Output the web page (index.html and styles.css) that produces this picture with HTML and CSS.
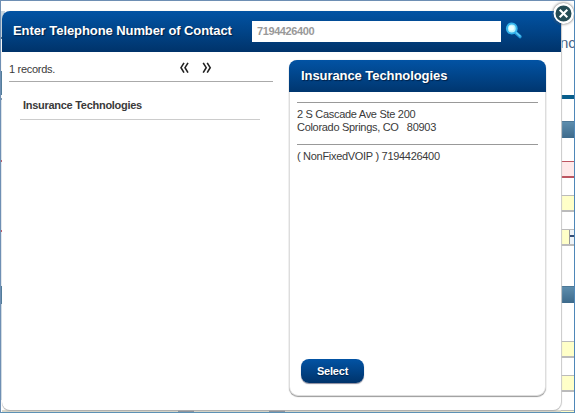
FILE: index.html
```html
<!DOCTYPE html>
<html lang="en">
<head>
<meta charset="utf-8">
<title>Contact Lookup</title>
<link rel="stylesheet" href="styles.css">
</head>
<body>
<div class="page">
  <div class="heading">nc</div>
  <div class="rule"></div>
  <div class="section first"></div>
  <div class="field error"></div>
  <div class="field"></div>
  <div class="field select"><span class="arrow"></span></div>
  <div class="section second"></div>
  <div class="field third"></div>
  <div class="field"></div>
  <div class="field last"></div>
</div>
<div class="edge"></div>
<div class="foot"><i></i><i></i><i></i></div>
<main class="dialog">
  <header class="bar">
    <h1 class="title">Enter Telephone Number of Contact</h1>
    <div class="input"><span>7194426400</span></div>
    <svg class="search" viewBox="0 0 18 18" width="18" height="18">
      <path d="M10.5 10.5 15 14.6" stroke="#249bdc" stroke-width="3.4" stroke-linecap="round"/>
      <path d="M10.8 10.2 15 14" stroke="#69d0f6" stroke-width="1.3" stroke-linecap="round"/>
      <circle cx="6.8" cy="6.5" r="4.9" fill="#b9f3fc" stroke="#35b5ed" stroke-width="2"/>
      <circle cx="6.4" cy="6" r="2.6" fill="#e9feff"/>
    </svg>
  </header>
  <div class="body">
    <section class="results">
      <div class="pager">
        <span class="count">1 records.</span>
        <svg class="arrows" width="34" height="13" viewBox="0 0 34 13" fill="none" stroke="#222" stroke-width="1.6">
          <path d="M5 .8 2 5.7 5 10.6M9 .8 6 5.7 9 10.6M24.2 .8 27.2 5.7 24.2 10.6M28.2 .8 31.2 5.7 28.2 10.6"/>
        </svg>
      </div>
      <div class="result"><span>Insurance Technologies</span></div>
    </section>
    <section class="card">
      <h2 class="card-title"><span>Insurance Technologies</span></h2>
      <div class="details">
        <div class="address"><span class="line1">2 S Cascade Ave Ste 200</span><br><span class="line2">Colorado Springs, CO &nbsp; 80903</span></div>
        <div class="phone"><span>( NonFixedVOIP ) 7194426400</span></div>
      </div>
      <button class="choose"><span>Select</span></button>
    </section>
  </div>
</main>
<svg class="close" width="21" height="21" viewBox="0 0 21 21">
  <circle cx="10.5" cy="10.5" r="9" fill="#254c55" stroke="#fff" stroke-width="2"/>
  <path d="M6.7 6.7 14.3 14.3M14.3 6.7 6.7 14.3" stroke="#fff" stroke-width="2.1"/>
</svg>
<div class="frame"></div>
</body>
</html>
```
FILE: styles.css
```css
* { box-sizing: border-box; }
body {
  margin: 0;
  width: 575px;
  height: 413px;
  overflow: hidden;
  position: relative;
  background: #fff;
  color: #3a3a3a;
  font: 11px/13px "Liberation Sans", Arial, sans-serif;
}
h1, h2 { margin: 0; }

/* page behind the dialog */
.page { width: 15px; height: 413px; margin-left: auto; overflow: hidden; }
.heading { height: 95px; padding-top: 33px; font-size: 15px; line-height: 20px; color: #4a6387; }
.rule { height: 4px; background: #075d8b; }
.section { height: 17px; background: linear-gradient(#5d8dad, #3d6a8b); border-top: 1px solid #4d7897; }
.section.first { margin: 22px 0 23px; }
.section.second { margin: 40px 0 38px; }
.field { height: 17px; margin-bottom: 17px; background: #ffffc8; border: solid #bbb; border-width: 1px 0 2px; }
.field.error { background: #ffe9e9; border-color: #bd5560; }
.field.select { margin-bottom: 0; display: flex; justify-content: flex-end; }
.field.last { margin-top: 18px; }
.arrow { width: 6px; background: linear-gradient(#eef3f7 5px, #344f78 5px, #344f78 7px, #eef3f7 7px); border-left: 1px solid #999; }

.edge {
  position: absolute; left: 1px; top: 0; width: 4px; height: 413px;
  background: linear-gradient(#fff 11px, #c8d5df 11px 37px, #48617a 37px 39px, #fff 39px 71px, #4a7898 71px 95px, #fff 95px 98px, #7895ac 98px 100px, #e0e9f0 100px 160px, #b75a65 160px 162px, #e8eef3 162px 230px, #bd5560 230px 232px, #e8eef3 232px 286px, #4a7898 286px 304px, #d5e0e8 304px 400px, #fff 400px);
}
.foot {
  position: absolute; left: 2px; right: 14px; top: 410px; height: 2px;
  display: flex; justify-content: flex-start; gap: 75px; padding-left: 176px; background: #d9d8ca;
}
.foot i { width: 16px; background: #8b929c; }
.foot i:last-child { display: none; }

/* dialog */
.dialog {
  position: absolute; left: 2px; top: 11px; width: 559px; height: 399px;
  background: #fff; border-radius: 8px 0 8px 8px;
  box-shadow: 1px 0 1px #c9c9c9, 0 1px 1px #aaa;
}
.bar {
  height: 41px; display: flex; align-items: flex-start; padding: 10px 0 0 11px;
  border-radius: 8px 0 0 0;
  background: linear-gradient(#0253a4, #014488 50%, #00336a);
}
.title {
  width: 239px; white-space: nowrap; font-size: 13px; line-height: 20px; color: #fff;
  letter-spacing: -.08px; text-shadow: 1px 1px 1px #001f45;
}
.input {
  width: 249px; height: 21px; padding-left: 5px; background: #fff;
  color: #999; font-weight: bold; line-height: 20px; letter-spacing: -.4px;
}
.search { margin: 1px 0 0 4px; }
.body { display: flex; justify-content: space-between; padding: 8px 15px 0 7px; }
.results { width: 264px; }
.pager {
  height: 22px; display: flex; justify-content: space-between; align-items: flex-start;
  border-bottom: 1px solid #aaa; padding-right: 60px;
}
.count { padding-top: 3px; letter-spacing: -.3px; }
.arrows { margin-top: 2px; }
.result {
  width: 240px; height: 38px; margin-left: 11px; padding: 17px 0 0 3px;
  border-bottom: 1px solid #ccc; font-weight: bold; letter-spacing: -.28px;
}
.card {
  width: 257px; height: 336px; background: #fff; border-radius: 9px;
  border: 1px solid #ddd; box-shadow: 0 1px 1px #999, 0 0 1px #ccc;
}
.card-title {
  height: 32px; margin: -1px -1px 0; padding-left: 12px; border-radius: 8px 8px 0 0;
  background: linear-gradient(#0253a4, #00366f); color: #fff;
  font-size: 13px; line-height: 31px; letter-spacing: -.07px; text-shadow: 1px 1px 1px #001f45;
}
.details { margin: 10px 7px 0; letter-spacing: -.3px; }
.address, .phone { border-top: 1px solid #999; padding-top: 5px; }
.address { height: 42px; }
.phone { height: 215px; }
.choose {
  display: block; width: 63px; height: 24px; margin: 0 0 0 11px; padding: 0; border: 0;
  border-radius: 8px; background: linear-gradient(#0253a4, #00336a);
  box-shadow: 0 1px 1px #889; color: #fff; font: bold 11px/23px "Liberation Sans", Arial, sans-serif;
  letter-spacing: -.2px; text-shadow: 0 1px 1px #001f45;
}
.close { position: absolute; left: 553px; top: 3px; border-radius: 50%; box-shadow: 0 0 3px #555; }
.frame { position: absolute; inset: 0; border: 1px solid #6e8fb4; border-right-color: #4e87b8; border-bottom-color: #5c91b5; }
```
